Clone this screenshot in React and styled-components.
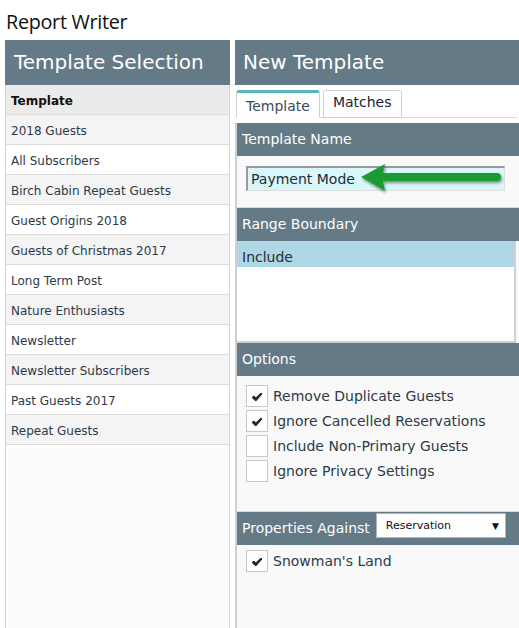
import React from "react";
import styled, { createGlobalStyle } from "styled-components";

const Global = createGlobalStyle`
  html, body { margin: 0; padding: 0; background: #fff; }
  body { font-family: "DejaVu Sans", Verdana, sans-serif; color: #222; overflow: hidden; }
  * { box-sizing: border-box; }
`;

const Page = styled.div`
  width: 519px;
  height: 628px;
  display: flex;
  flex-direction: column;
  overflow: hidden;
`;

const Title = styled.h1`
  margin: 0;
  height: 40px;
  padding: 9px 0 0 6px;
  font-family: "Open Sans", "Noto Sans", sans-serif;
  font-weight: 400;
  font-size: 19.8px;
  line-height: 26px;
  color: #111;
  letter-spacing: -0.3px;
`;

const Columns = styled.div`
  flex: 1;
  display: grid;
  grid-template-columns: 225px 284px;
  column-gap: 5px;
  padding-left: 5px;
  min-height: 0;
`;

const Panel = styled.section`
  display: flex;
  flex-direction: column;
  background: #fcfcfc;
  border-left: 1px solid #d6d6d6;
  border-right: 1px solid #d6d6d6;
  min-height: 0;
`;

const PanelHeader = styled.div`
  height: 45px;
  margin: ${(p) => (p.$bleed ? "0 -1px" : "0")};
  background: #647a86;
  color: #fff;
  font-size: 20px;
  line-height: 44px;
  padding-left: ${(p) => (p.$bleed ? "9px" : "8px")};
  white-space: nowrap;
`;

const List = styled.div`
  display: flex;
  flex-direction: column;
`;

const Row = styled.div`
  height: 30px;
  border-bottom: 1px solid #dcdcdc;
  background: ${(p) => (p.$head ? "#ebebeb" : p.$alt ? "#f4f4f4" : "#fff")};
  font-size: 12px;
  font-weight: ${(p) => (p.$head ? 700 : 400)};
  color: ${(p) => (p.$head ? "#111" : "#2c3a4a")};
  line-height: 27px;
  padding: 3px 0 0 5px;
  white-space: nowrap;
`;

const RightPanel = styled.section`
  display: flex;
  flex-direction: column;
  min-height: 0;
`;

const Tabs = styled.div`
  height: 33px;
  display: flex;
  align-items: flex-end;
  gap: 3px;
  padding-left: 1px;
  border-bottom: 1px solid #dcdcdc;
  margin-right: 2px;
`;

const Tab = styled.div`
  height: 28px;
  margin-bottom: -1px;
  padding: 0 9px;
  background: #fff;
  border: 1px solid #cfcfcf;
  border-top: ${(p) => (p.$active ? "3px solid #58b4bf" : "1px solid #cfcfcf")};
  border-bottom: ${(p) => (p.$active ? "1px solid #fff" : "1px solid #cfcfcf")};
  border-radius: 3px 3px 0 0;
  font-size: 14px;
  line-height: ${(p) => (p.$active ? "27px" : "23px")};
  color: ${(p) => (p.$active ? "#3c4a56" : "#223")};
`;

const Body = styled.div`
  flex: 1;
  margin-top: 5px;
  border-left: 2px solid #cfcfcf;
  background: #f9f9f9;
  display: flex;
  flex-direction: column;
`;

const SectionHeader = styled.div`
  height: 33px;
  background: #647a86;
  color: #fff;
  font-size: 14px;
  line-height: 33px;
  padding-left: 5px;
  display: flex;
  align-items: flex-start;
  gap: 6px;
  white-space: nowrap;
`;

const NameBox = styled.div`
  height: 52px;
  position: relative;
  padding: 10px 0 0 9px;
  border-bottom: 1px solid #dcdcdc;
`;

const NameInput = styled.div`
  width: 259px;
  height: 25px;
  background: #d8f7fa;
  border-top: 2px solid #9a9a9a;
  border-left: 2px solid #9a9a9a;
  border-right: 1px solid #dedede;
  border-bottom: 1px solid #dedede;
  font-size: 14px;
  line-height: 22px;
  padding-left: 3px;
  color: #1f2b36;
`;

const Arrow = styled.svg`
  position: absolute;
  left: 122px;
  top: 6px;
`;

const ListBox = styled.div`
  height: 102px;
  margin-right: 3px;
  background: #fff;
  border-right: 2px solid #d0d0d0;
  border-bottom: 2px solid #d0d0d0;
`;

const Option = styled.div`
  height: 26px;
  background: #add7e5;
  font-size: 14px;
  line-height: 26px;
  padding: 3px 0 0 5px;
  color: #2a2a2a;
`;

const Checks = styled.div`
  display: flex;
  flex-direction: column;
  gap: 3px;
  padding: ${(p) => p.$pad};
  border-bottom: ${(p) => (p.$last ? "none" : "1px solid #dcdcdc")};
  flex: ${(p) => (p.$last ? 1 : "none")};
`;

const CheckRow = styled.label`
  display: flex;
  align-items: center;
  gap: 5px;
  height: 22px;
  font-size: 14px;
  color: #2c3a4a;
  white-space: nowrap;
`;

const Box = styled.span`
  width: 22px;
  height: 22px;
  background: #fff;
  border: 1px solid #c8c8c8;
  display: flex;
  align-items: center;
  justify-content: center;
  padding-top: 2px;
`;

const Select = styled.div`
  margin-top: 1px;
  width: 130px;
  height: 25px;
  background: #fff;
  border: 1px solid #b5b5b5;
  display: flex;
  align-items: center;
  justify-content: space-between;
  padding: 0 6px 0 9px;
  font-size: 11px;
  line-height: 14px;
  color: #111;
`;

const Caret = styled.span`
  font-size: 9px;
  color: #111;
`;

const Check = () => (
  <svg width="12" height="10" viewBox="0 0 12 10">
    <path d="M1 5.5 L3 4 L4.7 6 L10 1 L11 2 L4.8 9 Z" fill="#1b2838" stroke="#1b2838" strokeWidth="1" strokeLinejoin="round" />
  </svg>
);

const CheckItem = ({ checked, children }) => (
  <CheckRow>
    <Box>{checked && <Check />}</Box>
    {children}
  </CheckRow>
);

const templates = [
  "2018 Guests",
  "All Subscribers",
  "Birch Cabin Repeat Guests",
  "Guest Origins 2018",
  "Guests of Christmas 2017",
  "Long Term Post",
  "Nature Enthusiasts",
  "Newsletter",
  "Newsletter Subscribers",
  "Past Guests 2017",
  "Repeat Guests",
];

export default function App() {
  return (
    <Page>
      <Global />
      <Title>Report Writer</Title>
      <Columns>
        <Panel>
          <PanelHeader $bleed>Template Selection</PanelHeader>
          <List>
            <Row $head>Template</Row>
            {templates.map((t, i) => (
              <Row key={t} $alt={i % 2 === 0}>
                {t}
              </Row>
            ))}
          </List>
        </Panel>
        <RightPanel>
          <PanelHeader>New Template</PanelHeader>
          <Tabs>
            <Tab $active>Template</Tab>
            <Tab>Matches</Tab>
          </Tabs>
          <Body>
            <SectionHeader>Template Name</SectionHeader>
            <NameBox>
              <NameInput>Payment Mode</NameInput>
              <Arrow width="150" height="36" viewBox="0 0 150 36">
                <defs>
                  <filter id="sh" x="-10%" y="-30%" width="120%" height="170%">
                    <feGaussianBlur in="SourceAlpha" stdDeviation="1.5" />
                    <feOffset dx="1" dy="2" result="b" />
                    <feComponentTransfer><feFuncA type="linear" slope="0.45" /></feComponentTransfer>
                    <feMerge><feMergeNode /><feMergeNode in="SourceGraphic" /></feMerge>
                  </filter>
                </defs>
                <g filter="url(#sh)">
                  <path d="M2 15 L26 2 L24 11 L138 11 Q142 11 142 15 Q142 19 138 19 L24 19 L26 29 Z" fill="#1e9a31" />
                </g>
              </Arrow>
            </NameBox>
            <SectionHeader>Range Boundary</SectionHeader>
            <ListBox>
              <Option>Include</Option>
            </ListBox>
            <SectionHeader>Options</SectionHeader>
            <Checks $pad="9px 0 29px 9px">
              <CheckItem checked>Remove Duplicate Guests</CheckItem>
              <CheckItem checked>Ignore Cancelled Reservations</CheckItem>
              <CheckItem>Include Non-Primary Guests</CheckItem>
              <CheckItem>Ignore Privacy Settings</CheckItem>
            </Checks>
            <SectionHeader>
              Properties Against
              <Select>
                Reservation
                <Caret>▼</Caret>
              </Select>
            </SectionHeader>
            <Checks $pad="5px 0 0 9px" $last>
              <CheckItem checked>Snowman's Land</CheckItem>
            </Checks>
          </Body>
        </RightPanel>
      </Columns>
    </Page>
  );
}
